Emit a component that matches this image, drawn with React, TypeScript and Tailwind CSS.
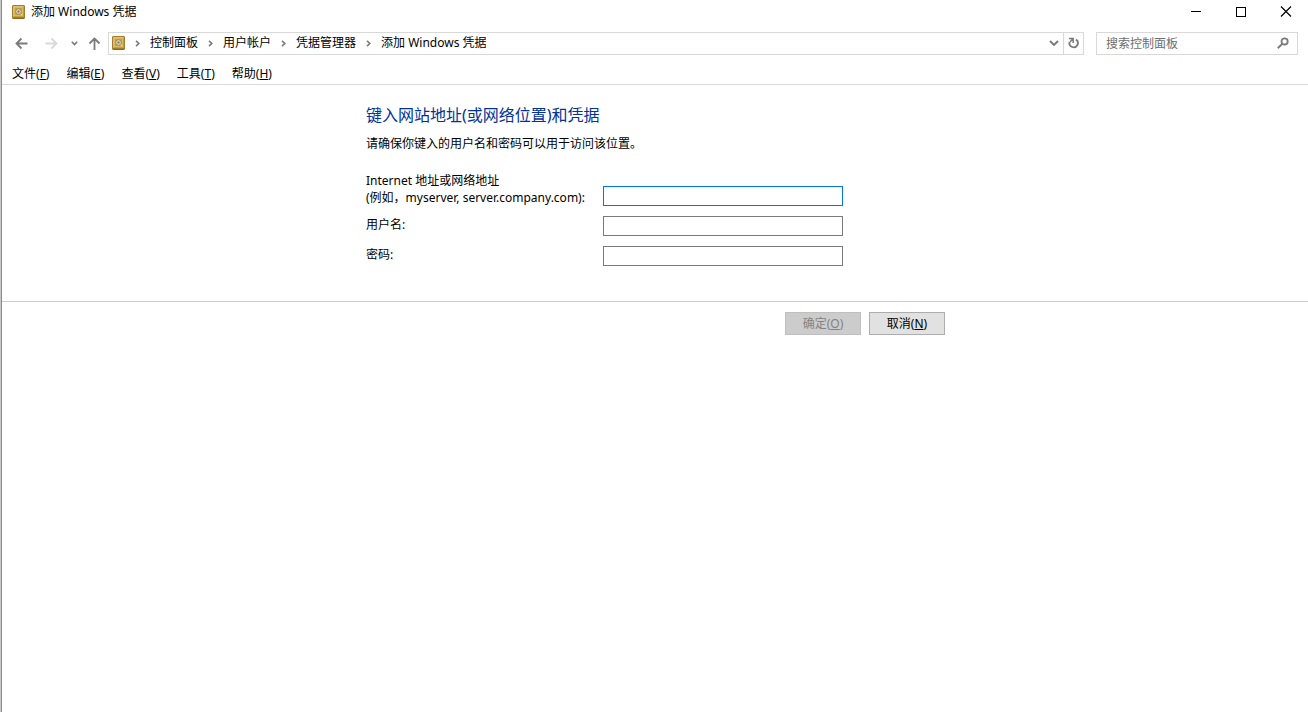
import { useState } from "react"
import type { ReactNode } from "react"

const crumbs = ["控制面板", "用户帐户", "凭据管理器", "添加 Windows 凭据"]

const menus = [
  { label: "文件", accessKey: "F" },
  { label: "编辑", accessKey: "E" },
  { label: "查看", accessKey: "V" },
  { label: "工具", accessKey: "T" },
  { label: "帮助", accessKey: "H" },
]

function VaultIcon() {
  return (
    <svg width="13" height="14" viewBox="0 0 13 14" className="shrink-0" aria-hidden="true">
      <rect x="0.5" y="0.5" width="12" height="13" rx="0.5" fill="#c39f4a" stroke="#a37d2c" />
      <path d="M1.5 11.5v-10h10" fill="none" stroke="#dcbf70" />
      <rect x="2.5" y="2.5" width="8" height="8" fill="#c2a04f" stroke="#d9b968" />
      <circle cx="6.5" cy="6.5" r="2.8" fill="#e4dcc0" stroke="#a58a48" />
      <circle cx="6.5" cy="6.5" r="1.2" fill="#8b8264" />
      <path d="M8.5 8.5l1.5 1.5" stroke="#f1e3b5" />
      <path d="M1 12.5h11" stroke="#a37d2c" />
      <path d="M1 13.5h11" stroke="#8d6a20" />
    </svg>
  )
}

function Chevron() {
  return (
    <svg width="5" height="7" viewBox="0 0 5 7" className="shrink-0" aria-hidden="true">
      <path d="M1 0.8L3.8 3.5L1 6.2" fill="none" stroke="#7a7a7a" strokeWidth="1.6" />
    </svg>
  )
}

function Arrow({ className, path }: { className: string; path: string }) {
  return (
    <svg width="13" height="13" viewBox="0 0 13 13" className={className} aria-hidden="true">
      <path d={path} fill="none" stroke="currentColor" strokeWidth="1.8" />
    </svg>
  )
}

function IconButton({ label, className, children }: { label: string; className: string; children: ReactNode }) {
  return (
    <button type="button" aria-label={label} className={`flex h-6 shrink-0 items-center justify-center ${className}`}>
      {children}
    </button>
  )
}

function TitleBar() {
  return (
    <header className="flex h-6 items-center justify-between pl-[10px]">
      <div className="flex items-center gap-[6px]">
        <VaultIcon />
        <h1>添加 Windows 凭据</h1>
      </div>
      <div className="flex">
        <IconButton label="最小化" className="w-[45px]">
          <svg width="11" height="11" viewBox="0 0 11 11" aria-hidden="true">
            <path d="M0 4.5h10" stroke="#000" />
          </svg>
        </IconButton>
        <IconButton label="最大化" className="w-[45px]">
          <svg width="11" height="11" viewBox="0 0 11 11" aria-hidden="true">
            <rect x="0.5" y="0.5" width="9" height="9" fill="none" stroke="#000" />
          </svg>
        </IconButton>
        <IconButton label="关闭" className="w-11">
          <svg width="12" height="12" viewBox="0 0 12 12" aria-hidden="true">
            <path d="M1 0.5l10 10M11 0.5l-10 10" stroke="#000" strokeWidth="1.2" />
          </svg>
        </IconButton>
      </div>
    </header>
  )
}

function NavBar() {
  return (
    <div className="mt-[7px] flex items-center pr-[10px] pl-[7px]">
      <IconButton label="后退" className="w-6">
        <Arrow className="text-[#7a7a7a]" path="M12.5 6.5H1.5M6.5 1.5l-5 5l5 5" />
      </IconButton>
      <IconButton label="前进" className="ml-[6px] w-6">
        <Arrow className="text-[#d9d9d9]" path="M0.5 6.5H11.5M6.5 1.5l5 5l-5 5" />
      </IconButton>
      <IconButton label="最近位置" className="ml-[3px] w-4">
        <svg width="7" height="5" viewBox="0 0 7 5" aria-hidden="true">
          <path d="M0.8 0.8L3.5 3.5L6.2 0.8" fill="none" stroke="#7a7a7a" strokeWidth="1.6" />
        </svg>
      </IconButton>
      <IconButton label="上移" className="mr-[2px] w-6">
        <Arrow className="text-[#7a7a7a]" path="M6.5 13V1.5M1.5 6.5l5-5l5 5" />
      </IconButton>
      <div className="flex h-[23px] min-w-0 flex-1 border border-[#d9d9d9]">
        <nav aria-label="地址" className="flex flex-1 items-center gap-[10px] pl-[3px]">
          <VaultIcon />
          {crumbs.map((crumb) => (
            <div key={crumb} className="flex items-center gap-[10px]">
              <Chevron />
              <a href="#" className="whitespace-nowrap">{crumb}</a>
            </div>
          ))}
        </nav>
        <button type="button" aria-label="以前的位置" className="flex w-[18px] items-center justify-center">
          <svg width="10" height="7" viewBox="0 0 10 7" aria-hidden="true">
            <path d="M1 1l4 4l4-4" fill="none" stroke="#7a7a7a" strokeWidth="1.9" />
          </svg>
        </button>
        <button type="button" aria-label="刷新" className="flex w-5 items-center justify-center border-l border-[#d9d9d9]">
          <svg width="11" height="12" viewBox="0 0 11 12" aria-hidden="true">
            <path d="M8 2.6A4.2 4.2 0 1 1 1.6 5" fill="none" stroke="#7a7a7a" strokeWidth="1.8" />
            <path d="M1 1.5h4.2v4.5M5 1.7L2 5" fill="none" stroke="#7a7a7a" strokeWidth="1.5" />
          </svg>
        </button>
      </div>
      <div className="ml-3 flex h-[23px] w-[202px] shrink-0 items-center border border-[#d9d9d9] pr-2 pl-[9px]">
        <input
          type="text"
          aria-label="搜索控制面板"
          placeholder="搜索控制面板"
          className="h-full min-w-0 flex-1 pt-px outline-none placeholder:text-[#6d6d6d]"
        />
        <svg width="12" height="12" viewBox="0 0 12 12" aria-hidden="true">
          <circle cx="7.6" cy="4.4" r="3.1" fill="none" stroke="#7a7a7a" strokeWidth="1.8" />
          <path d="M5.4 6.6L0.8 11.2" stroke="#7a7a7a" strokeWidth="2" />
        </svg>
      </div>
    </div>
  )
}

function MenuBar() {
  return (
    <div className="flex h-[30px] items-center gap-[17px] border-b border-[#d9d9d9] pt-2 pl-[10px]">
      {menus.map((menu) => (
        <button key={menu.accessKey} type="button" className="whitespace-nowrap">
          {menu.label}(<u>{menu.accessKey}</u>)
        </button>
      ))}
    </div>
  )
}

export default function App() {
  const [address, setAddress] = useState("")
  const [userName, setUserName] = useState("")
  const [password, setPassword] = useState("")

  return (
    <div className="border-l border-[#c8c8c8]">
      <div className="min-h-screen border-l border-[#3cb489] bg-white font-['Noto_Sans','Noto_Sans_CJK_SC',sans-serif] text-[12px] leading-4 text-black">
        <TitleBar />
        <NavBar />
        <MenuBar />
        <form onSubmit={(e) => e.preventDefault()}>
          <div className="border-b border-[#cccccc] pt-[18px] pb-[35px]">
            <div className="mx-auto w-[578px]">
              <h2 className="text-[16px] leading-6 text-[#003399]">键入网站地址(或网络位置)和凭据</h2>
              <p className="mt-[9px]">请确保你键入的用户名和密码可以用于访问该位置。</p>
              <div className="mt-5 grid grid-cols-[237px_240px] gap-y-[10px]">
                <label htmlFor="address" className="leading-[17px]">
                  Internet 地址或网络地址
                  <br />
                  (例如，myserver, server.company.com):
                </label>
                <input
                  id="address"
                  type="text"
                  value={address}
                  onChange={(e) => setAddress(e.target.value)}
                  className="h-5 self-end border border-[#0078d7] px-1 outline-none"
                />
                <label htmlFor="user" className="leading-[18px]">用户名:</label>
                <input
                  id="user"
                  type="text"
                  value={userName}
                  onChange={(e) => setUserName(e.target.value)}
                  className="h-5 border border-[#7a7a7a] px-1 outline-none"
                />
                <label htmlFor="password" className="leading-[18px]">密码:</label>
                <input
                  id="password"
                  type="password"
                  value={password}
                  onChange={(e) => setPassword(e.target.value)}
                  className="h-5 border border-[#7a7a7a] px-1 outline-none"
                />
              </div>
            </div>
          </div>
          <div className="mx-auto flex w-[580px] justify-end gap-2 pt-[10px]">
            <button type="submit" disabled className="h-[23px] w-[76px] border border-[#bfbfbf] bg-[#cccccc] text-[#838383]">
              确定(<u>O</u>)
            </button>
            <button type="button" className="h-[23px] w-[76px] border border-[#adadad] bg-[#e1e1e1]">
              取消(<u>N</u>)
            </button>
          </div>
        </form>
      </div>
    </div>
  )
}
